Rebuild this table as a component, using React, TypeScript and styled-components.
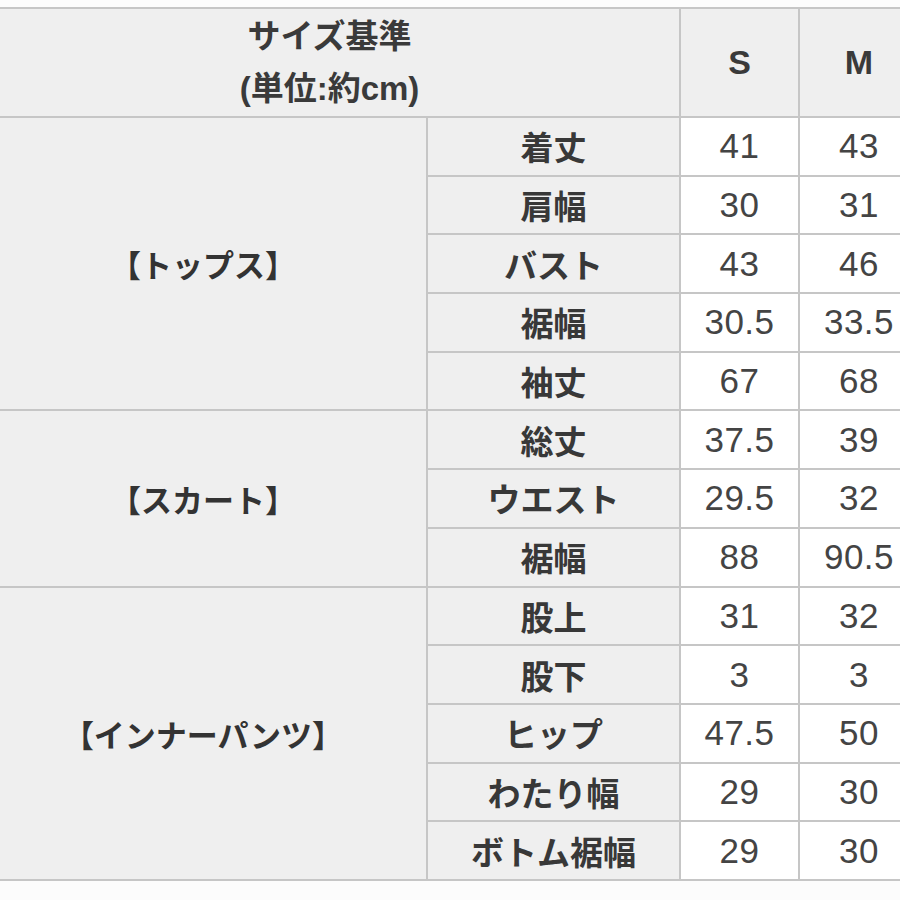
import styled, { createGlobalStyle } from "styled-components";

const Global = createGlobalStyle`
    html, body {
        margin: 0;
        padding: 0;
        background: #ffffff;
        overflow: hidden;
    }
    body {
        font-family: "Liberation Sans", "Noto Sans CJK JP", sans-serif;
    }
`

const Page = styled.div`
    width: 900px;
    height: 900px;
    padding-top: 7px;
    box-sizing: border-box;
    overflow: hidden;
    background: #fcfcfc;
`

const Sheet = styled.div`
    margin-left: -22px;
    width: max-content;
    display: grid;
    grid-template-columns: 446px 251px 117px 118px;
    grid-template-rows: 107px repeat(13, 56.7px);
    gap: 2px;
    padding: 2px;
    background: #c6c6c6;
`

const Cell = styled.div<{ $white?: boolean; $span?: number; $cols?: number }>`
    display: flex;
    flex-direction: column;
    align-items: center;
    justify-content: center;
    background: ${p => (p.$white ? "#ffffff" : "#efefef")};
    grid-row: ${p => (p.$span ? `span ${p.$span}` : "auto")};
    grid-column: ${p => (p.$cols ? `span ${p.$cols}` : "auto")};
    color: #363636;
`

const Title = styled.div`
    font-family: "Liberation Sans", "Noto Sans CJK JP", sans-serif;
    font-weight: 700;
    font-size: 33px;
    line-height: 52px;
    color: #3a3a3a;
`

const SizeHead = styled.span`
    font-family: "Liberation Sans", sans-serif;
    font-weight: 700;
    font-size: 34px;
    color: #3a3a3a;
`

const Group = styled.span`
    font-family: "Noto Sans CJK JP", sans-serif;
    font-weight: 700;
    font-size: 31px;
    color: #333333;
`

const Label = styled.span`
    font-family: "Liberation Sans", "Noto Sans CJK JP", sans-serif;
    font-weight: 700;
    font-size: 33px;
    color: #383838;
`

const Value = styled.span`
    font-family: "Liberation Sans", sans-serif;
    font-size: 35px;
    letter-spacing: 0.5px;
    color: #444444;
`

const groups = [
    {
        name: "【トップス】",
        rows: [
            ["着丈", "41", "43"],
            ["肩幅", "30", "31"],
            ["バスト", "43", "46"],
            ["裾幅", "30.5", "33.5"],
            ["袖丈", "67", "68"],
        ],
    },
    {
        name: "【スカート】",
        rows: [
            ["総丈", "37.5", "39"],
            ["ウエスト", "29.5", "32"],
            ["裾幅", "88", "90.5"],
        ],
    },
    {
        name: "【インナーパンツ】",
        rows: [
            ["股上", "31", "32"],
            ["股下", "3", "3"],
            ["ヒップ", "47.5", "50"],
            ["わたり幅", "29", "30"],
            ["ボトム裾幅", "29", "30"],
        ],
    },
]

function App() {
    return (
        <>
            <Global />
            <Page>
                <Sheet>
                    <Cell $cols={2}>
                        <Title>サイズ基準</Title>
                        <Title>(単位:約cm)</Title>
                    </Cell>
                    <Cell><SizeHead>S</SizeHead></Cell>
                    <Cell><SizeHead>M</SizeHead></Cell>
                    {groups.map(g => (
                        <>
                            <Cell key={g.name} $span={g.rows.length}>
                                <Group>{g.name}</Group>
                            </Cell>
                            {g.rows.map(([label, s, m], i) => (
                                <>
                                    <Cell key={g.name + label + i}><Label>{label}</Label></Cell>
                                    <Cell $white><Value>{s}</Value></Cell>
                                    <Cell $white><Value>{m}</Value></Cell>
                                </>
                            ))}
                        </>
                    ))}
                </Sheet>
            </Page>
        </>
    )
}

export default App;
